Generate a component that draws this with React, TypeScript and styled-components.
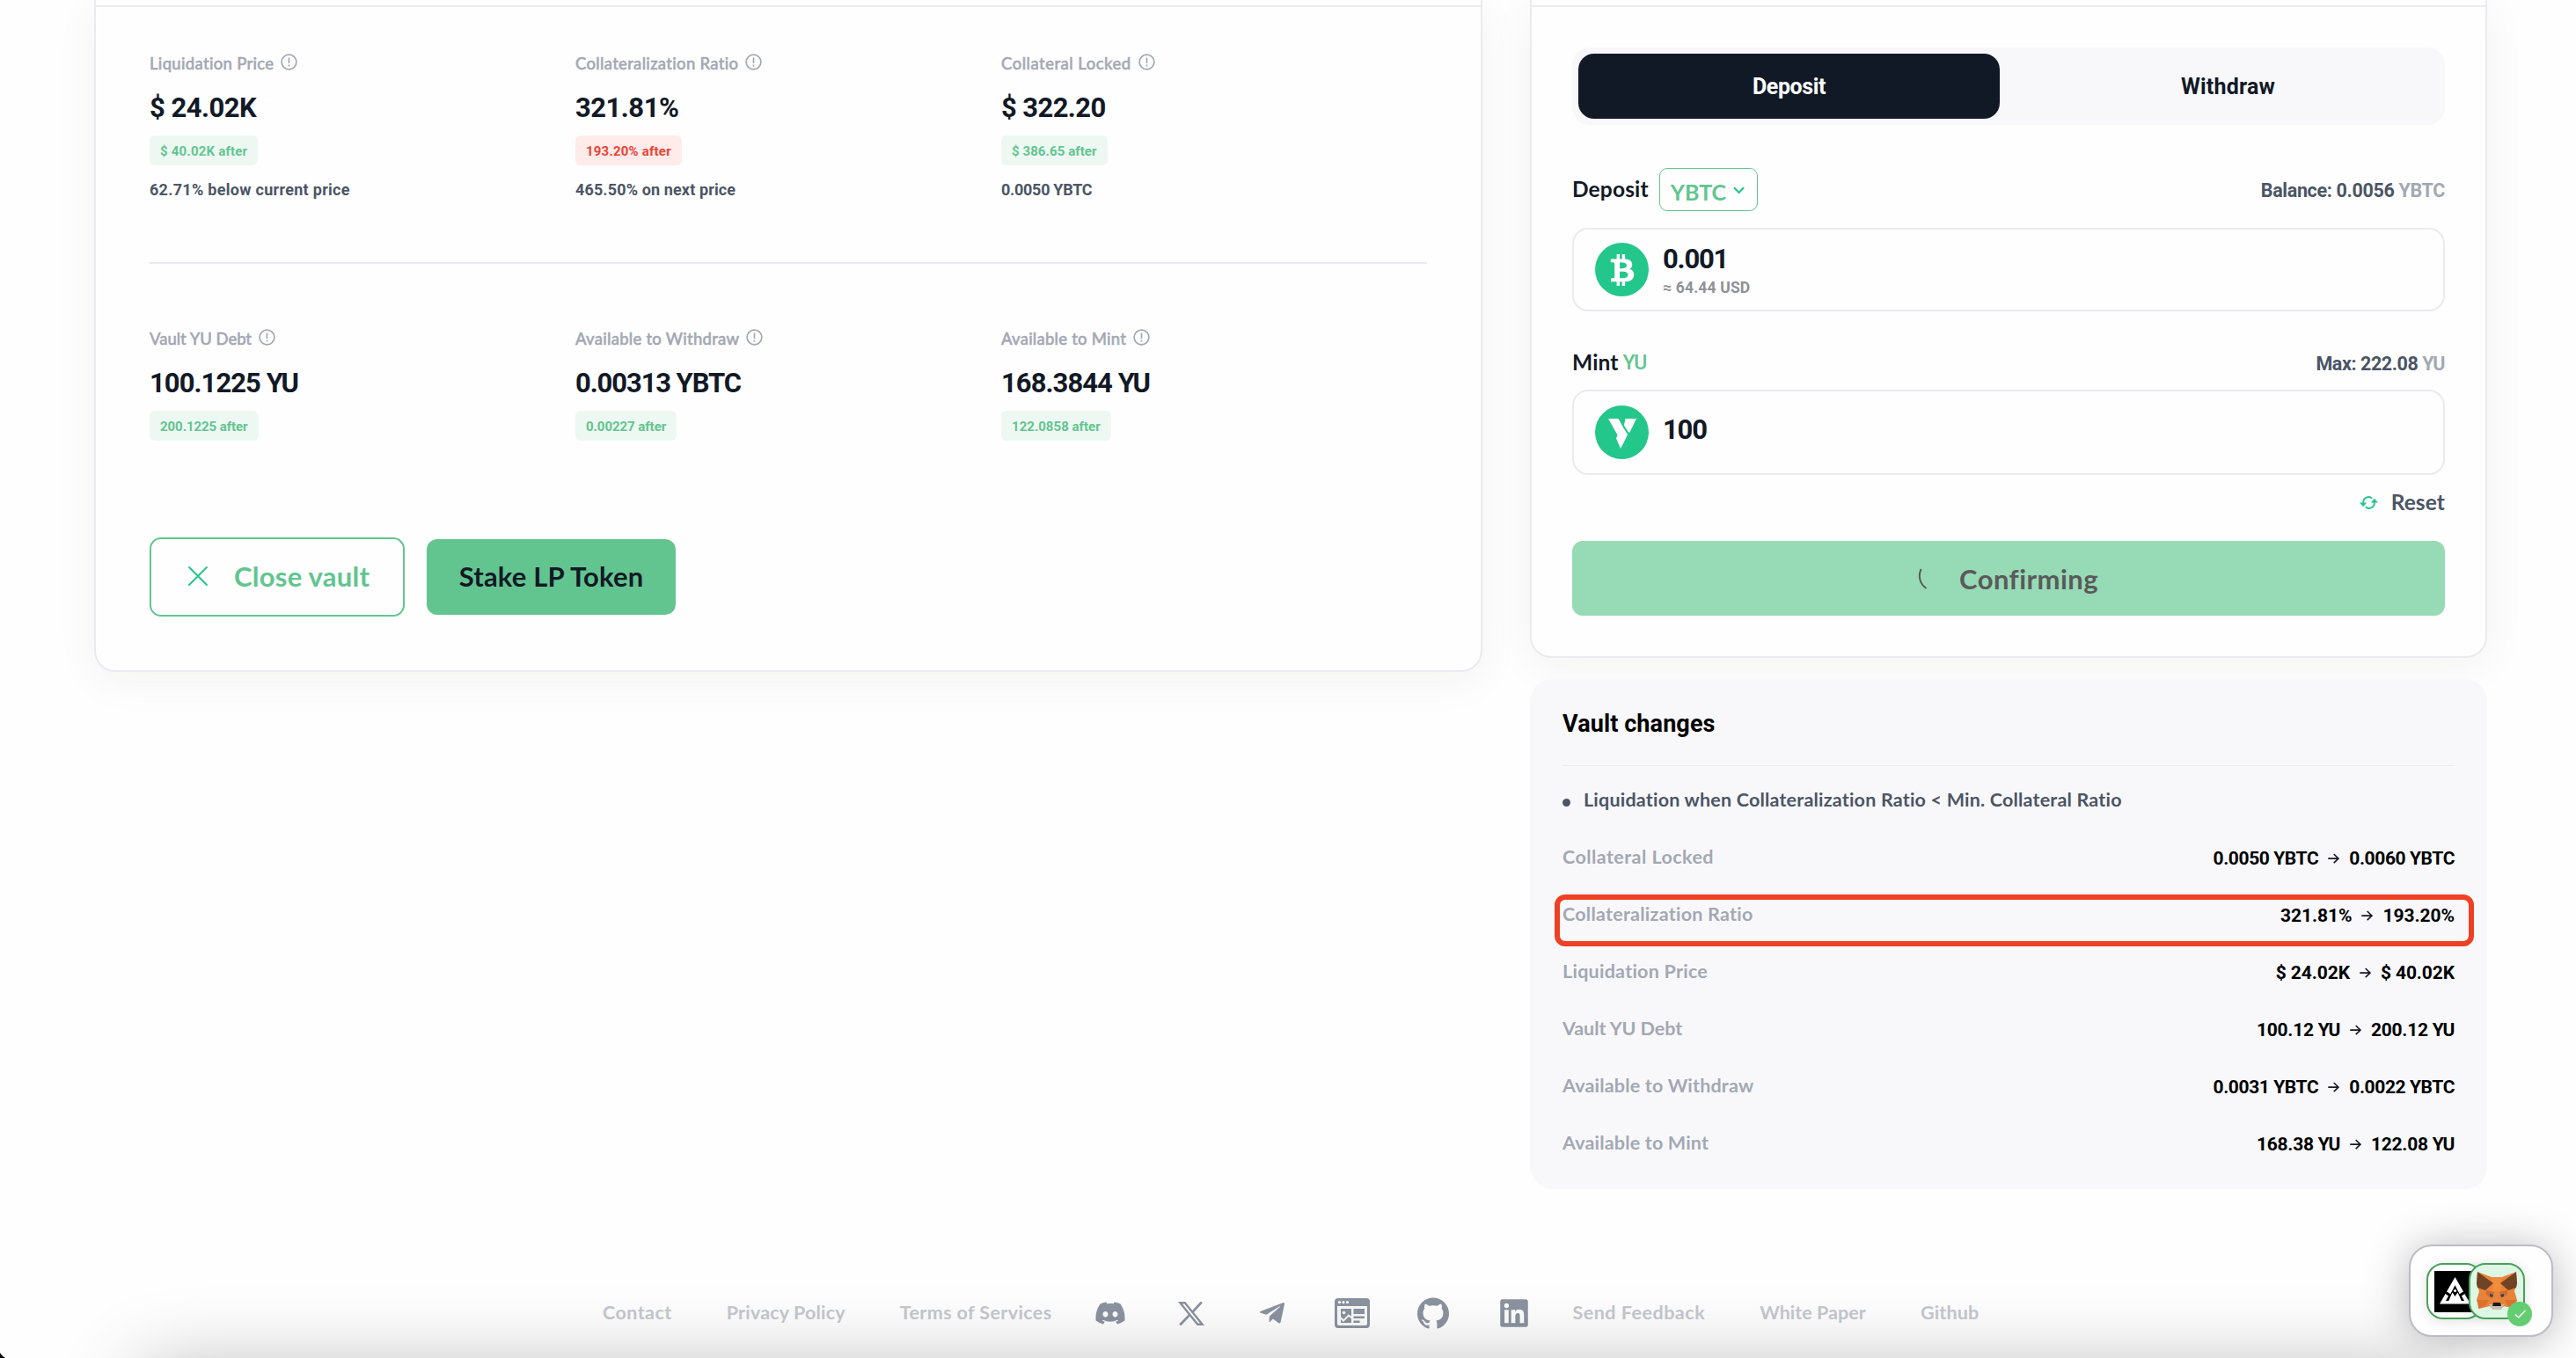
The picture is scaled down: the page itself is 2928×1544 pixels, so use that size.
import React from "react";
import styled, { createGlobalStyle } from "styled-components";
import { FaBtc, FaDiscord, FaLinkedin, FaTelegramPlane } from "react-icons/fa";
import { SiGithub } from "react-icons/si";

const sans = `Lato, "Open Sans", sans-serif`;
const din = `Roboto, "Noto Sans", sans-serif`;

const color = {
  ink: "#121926",
  slate: "#4b5565",
  muted: "#a3a8b3",
  green: "#62c58f",
  mint: "#24c78b",
  line: "#eaeaef",
  panel: "#f8f8fb",
};

const GlobalStyle = createGlobalStyle`
  *, *::before, *::after { box-sizing: border-box; }
  html, body { margin: 0; padding: 0; background: #fefefe; }
  body { font-family: ${sans}; color: ${color.ink}; overflow: hidden; }
  button { font: inherit; color: inherit; margin: 0; padding: 0; border: 0; background: none; }
  svg { display: block; }
`;

const Page = styled.div`
  position: relative;
  width: 2928px;
  height: 1544px;
  overflow: hidden;
  display: flex;
  flex-direction: column;
`;

const Columns = styled.main`
  display: flex;
  align-items: flex-start;
  gap: 54px;
  height: 1352px;
  padding-left: 107px;
`;

const Card = styled.section<{ $width: number; $height: number }>`
  width: ${(p) => p.$width}px;
  height: ${(p) => p.$height}px;
  border: 2px solid ${color.line};
  border-top: 0;
  border-radius: 0 0 24px 24px;
  background: #fefefe;
  box-shadow: 0 10px 50px rgba(30, 30, 20, 0.05);
`;

const CardHeaderEdge = styled.div`
  height: 8px;
  border-bottom: 2px solid ${color.line};
`;

const StatGrid = styled.div`
  display: grid;
  grid-template-columns: repeat(3, 484px);
  grid-template-rows: 292px 311px;
  padding: 0 61px;
`;

const StatCell = styled.div<{ $lined: boolean }>`
  display: flex;
  flex-direction: column;
  align-items: flex-start;
  padding-top: ${(p) => (p.$lined ? 52 : 73)}px;
  border-bottom: ${(p) => (p.$lined ? `2px solid ${color.line}` : "0")};
`;

const Tracked = styled.span<{ $track?: number }>`
  letter-spacing: ${(p) => p.$track ?? 0}px;
`;

const StatLabel = styled.div`
  display: flex;
  gap: 8px;
  font: 500 18.5px/24px ${sans};
  color: ${color.muted};
  -webkit-text-stroke: 0.5px ${color.muted};
  white-space: nowrap;

  svg {
    margin-top: 1px;
  }
`;

const StatValue = styled.div`
  margin-top: 19px;
  font: 700 31px/40px ${din};
  white-space: nowrap;
`;

const AfterBadge = styled.div<{ $danger?: boolean }>`
  margin-top: 11px;
  height: 34px;
  padding: 0 12px;
  border-radius: 6px;
  font: 700 15px/36px ${din};
  white-space: nowrap;
  color: ${(p) => (p.$danger ? "#ea4335" : color.green)};
  background: ${(p) => (p.$danger ? "#ffebea" : "#eef8f3")};
`;

const StatNote = styled.div`
  margin-top: 15px;
  font: 700 18px/25px ${din};
  color: ${color.slate};
  white-space: nowrap;
`;

const Actions = styled.div`
  display: flex;
  align-items: center;
  gap: 25px;
  padding: 0 61px;
`;

const OutlineButton = styled.button`
  display: flex;
  align-items: center;
  gap: 29px;
  width: 290px;
  height: 90px;
  padding: 0 0 2px 41px;
  border: 2px solid ${color.green};
  border-radius: 13px;
  font: 700 31px/40px ${sans};
  letter-spacing: 0.25px;
  color: ${color.green};
  white-space: nowrap;
`;

const SolidButton = styled.button`
  width: 283px;
  height: 86px;
  padding-bottom: 2px;
  border-radius: 12px;
  font: 700 31px/40px ${sans};
  letter-spacing: 0.2px;
  color: ${color.ink};
  background: ${color.green};
  white-space: nowrap;
`;

const SideColumn = styled.div`
  display: flex;
  flex-direction: column;
  gap: 24px;
`;

const FormBody = styled.div`
  display: flex;
  flex-direction: column;
  padding: 46px 46px 0;
`;

const Tabs = styled.div`
  display: grid;
  grid-template-columns: 479px 479px;
  gap: 20px;
  height: 88px;
  padding: 7px;
  border-radius: 20px;
  background: ${color.panel};
`;

const Tab = styled.button<{ $active?: boolean }>`
  padding-top: 2px;
  border-radius: 18px;
  font: 700 25px/72px ${din};
  color: ${(p) => (p.$active ? "#fff" : color.ink)};
  background: ${(p) => (p.$active ? color.ink : "transparent")};
`;

const FieldHead = styled.div<{ $top: number; $height: number }>`
  display: flex;
  align-items: center;
  justify-content: space-between;
  margin-top: ${(p) => p.$top}px;
  height: ${(p) => p.$height}px;
`;

const FieldTitle = styled.div`
  display: flex;
  align-items: center;
  gap: 12px;
  font: 700 24.5px/32px ${sans};
  letter-spacing: 0.15px;
  white-space: nowrap;
`;

const FieldName = styled.span<{ $raise?: number }>`
  padding-bottom: ${(p) => p.$raise ?? 0}px;
`;

const GreenUnit = styled.span`
  margin-left: -7px;
  padding-top: 2px;
  font: 500 23px/32px ${din};
  letter-spacing: -0.4px;
  color: ${color.green};
`;

const AssetSelect = styled.button`
  display: flex;
  align-items: center;
  gap: 8px;
  width: 112px;
  height: 49px;
  padding: 4px 0 0 12px;
  border: 1.5px solid ${color.green};
  border-radius: 9px;
  font: 700 25px/32px ${sans};
  color: ${color.green};

  svg {
    margin-bottom: 2px;
  }
`;

const Available = styled.div<{ $track: number }>`
  padding-top: 3px;
  font: 700 21.5px/30px ${din};
  letter-spacing: ${(p) => p.$track}px;
  color: ${color.slate};
  white-space: nowrap;
`;

const Unit = styled.span`
  color: ${color.muted};
`;

const AmountBox = styled.div<{ $top: number; $height: number }>`
  display: flex;
  align-items: center;
  gap: 16px;
  margin-top: ${(p) => p.$top}px;
  height: ${(p) => p.$height}px;
  padding-left: 24px;
  border: 2px solid ${color.line};
  border-radius: 18px;
`;

const TokenDisc = styled.div`
  display: flex;
  align-items: center;
  justify-content: center;
  width: 61px;
  height: 61px;
  border-radius: 50%;
  color: #fff;
  background: ${color.mint};
`;

const Amount = styled.div<{ $raise?: number }>`
  padding-bottom: ${(p) => p.$raise ?? 0}px;
  font: 700 31px/40px ${din};
  letter-spacing: -1.2px;
  white-space: nowrap;
`;

const AmountStack = styled.div`
  display: flex;
  flex-direction: column;
  height: 95px;
  padding-top: 16px;
`;

const AmountUsd = styled.div`
  font: 700 17.5px/24px ${din};
  letter-spacing: 0.15px;
  color: #8f9198;
  white-space: nowrap;
`;

const ResetRow = styled.div`
  display: flex;
  align-items: center;
  justify-content: flex-end;
  gap: 15px;
  margin-top: 14px;
  height: 34px;
  font: 700 24.5px/34px ${sans};
  letter-spacing: 0.1px;
  color: ${color.slate};
`;

const ConfirmButton = styled.button`
  display: flex;
  align-items: center;
  justify-content: center;
  gap: 36px;
  height: 85px;
  margin-top: 27px;
  padding-right: 1px;
  border-radius: 12px;
  font: 700 31px/40px ${sans};
  letter-spacing: 0.45px;
  color: #5a5a5a;
  background: #97dab6;
  box-shadow: 0 4px 4px rgba(0, 0, 0, 0.012);
`;

const ChangesPanel = styled.section`
  display: flex;
  flex-direction: column;
  width: 1088px;
  height: 580px;
  padding: 34px 37px 0;
  border-radius: 26px;
  background: ${color.panel};
`;

const ChangesTitle = styled.h2`
  margin: 0;
  height: 65px;
  border-bottom: 1px solid ${color.line};
  font: 700 27px/34px ${din};
  letter-spacing: 0.1px;
  color: #000;
`;

const Warning = styled.div`
  display: flex;
  align-items: center;
  gap: 15px;
  margin-top: 22px;
  height: 32px;
  font: 700 21.5px/32px ${sans};
  letter-spacing: 0.2px;
  color: ${color.slate};
`;

const Bullet = styled.i`
  width: 9px;
  height: 9px;
  margin-top: 6px;
  border-radius: 50%;
  background: ${color.slate};
`;

const ChangeList = styled.div`
  display: flex;
  flex-direction: column;
  padding-top: 17px;
`;

const ChangeRow = styled.div`
  position: relative;
  display: flex;
  align-items: center;
  justify-content: space-between;
  height: 65px;
`;

const ChangeName = styled.div`
  padding-bottom: 1px;
  font: 700 21.5px/32px ${sans};
  color: ${color.muted};
`;

const ChangeValues = styled.div`
  display: flex;
  align-items: center;
  gap: 11px;
  padding-top: 3px;
  font: 700 21px/32px ${din};
  color: #000;
`;

const Highlight = styled.div`
  position: absolute;
  left: -9px;
  top: 10px;
  width: 1045px;
  height: 59px;
  border: 6px solid #ee4024;
  border-radius: 12px;
`;

const Footer = styled.footer`
  display: flex;
  align-items: center;
  height: 80px;
  margin-top: 101px;
  padding-left: 685px;
  font: 700 21.5px/32px ${sans};
  color: #c5c8ce;
  white-space: nowrap;
`;

const FooterLinks = styled.nav<{ $width?: number }>`
  display: flex;
  gap: 62px;
  padding-bottom: 2px;
  width: ${(p) => (p.$width ? `${p.$width}px` : "auto")};
`;

const Socials = styled.div`
  display: grid;
  grid-template-columns: repeat(6, 91.7px);
  place-items: center;
  width: 571px;
  color: #8b93a0;
`;

const PageShade = styled.div`
  position: absolute;
  left: 160px;
  right: 160px;
  top: 1560px;
  height: 400px;
  border-radius: 20px;
  pointer-events: none;
  box-shadow: 0 0 94px rgba(0, 0, 0, 0.3);
`;

const WindowCorner = styled.div`
  position: absolute;
  left: 0;
  bottom: 0;
  width: 20px;
  height: 20px;
  background: radial-gradient(circle at 20px 0, transparent 24px, #000 25px);
`;

const WalletDock = styled.aside`
  position: absolute;
  left: 2738px;
  top: 1415px;
  display: flex;
  width: 164px;
  height: 105px;
  padding: 19px 0 0 18px;
  border: 2px solid #bcbcc6;
  border-radius: 26px;
  background: #fefefe;
  box-shadow: 0 4px 50px rgba(0, 0, 0, 0.28);
`;

const WalletTile = styled.div<{ $tint?: boolean }>`
  position: relative;
  display: flex;
  align-items: center;
  justify-content: center;
  width: 64px;
  height: 64px;
  margin-left: ${(p) => (p.$tint ? -16 : 0)}px;
  border: 2px solid #48a05a;
  border-radius: 19px;
  background: ${(p) => (p.$tint ? "#dcf7e4" : "#fff")};
  box-shadow: 0 2px 14px rgba(0, 0, 0, 0.12);
`;

const Connected = styled.div`
  position: absolute;
  right: -10px;
  bottom: -10px;
  width: 28px;
  height: 28px;
  border-radius: 50%;
  background: #63cd72;
`;

const InfoIcon = () => (
  <svg width="19" height="19" viewBox="0 0 19 19" fill="none" stroke={color.muted} strokeWidth="1.7">
    <circle cx="9.5" cy="9.5" r="8.4" />
    <path d="M9.5 4.6v6.4M9.5 12.6v1.9" />
  </svg>
);

const CrossIcon = () => (
  <svg width="24" height="24" viewBox="0 0 24 24" stroke={color.mint} strokeWidth="2" strokeLinecap="round">
    <path d="M2 2l20 20M22 2L2 22" />
  </svg>
);

const ChevronIcon = () => (
  <svg width="13" height="9" viewBox="0 0 13 9" fill="none" stroke={color.mint} strokeWidth="2.2">
    <path d="M1 1.2l5.5 5.8L12 1.2" />
  </svg>
);

const ArrowIcon = () => (
  <svg width="13" height="13" viewBox="0 0 13 13" fill="none" stroke="#121926" strokeWidth="1.6">
    <path d="M.3 6.1h11.6M6.700 1l5.3 5.1-5.3 5.1" />
  </svg>
);

const YuMark = () => (
  <svg width="34" height="36" viewBox="0 0 34 36" fill="#fff">
    <path d="M1 2h11.500l5.500 10 5 8-2 4.500-6 11.500-5-11.500 1.500-4z" />
    <path d="M20.500 2H33l-7.500 15.500h-1.600l-5-8z" />
  </svg>
);

const ResetIcon = () => (
  <svg width="21" height="17" viewBox="0 0 21 17" fill="none" stroke={color.mint} strokeWidth="2">
    <path d="M4.200 9.500V8a6 6 0 0 1 10-4.300" />
    <path d="M16.800 7.500V9a6 6 0 0 1-10 4.300" />
    <path d="M0 8.600h8.200l-4.100 4.600zM12.800 8.400h8.200l-4.100-4.600z" fill={color.mint} stroke="none" />
  </svg>
);

const SpinnerArc = () => (
  <svg width="11" height="24" viewBox="0 0 11 24" fill="none" stroke="#5a5a5a" strokeWidth="2">
    <path d="M3.600 1C.4 8 1.200 17 9.500 23" />
  </svg>
);

const XIcon = () => (
  <svg width="32" height="27" viewBox="0 0 32 27" fill="none" stroke="currentColor">
    <path d="M3.400 1.200h5.400L28.600 25.800h-5.400z" strokeWidth="2.400" />
    <path d="M27.800.5L17.600 11.600M13.800 15.400L3.200 26.500" strokeWidth="2.800" />
  </svg>
);

const NewsIcon = () => (
  <svg width="40" height="34" viewBox="0 0 40 34">
    <rect width="40" height="34" rx="4" fill="#8b93a0" />
    <path d="M3 9h34v20a2 2 0 0 1-2 2H5a2 2 0 0 1-2-2z" fill="#fafafa" />
    <g fill="#fafafa">
      <circle cx="5.500" cy="4.600" r="1.600" />
      <circle cx="10" cy="4.600" r="1.600" />
      <circle cx="14.500" cy="4.600" r="1.600" />
    </g>
    <g fill="#8b93a0">
      <rect x="7" y="12" width="12" height="16" />
      <rect x="21.500" y="12" width="12.500" height="6" />
      <rect x="21.500" y="20.500" width="12.500" height="2.500" />
      <rect x="21.500" y="25.500" width="7" height="2.500" />
    </g>
    <circle cx="10.500" cy="16.500" r="1.800" fill="#fafafa" />
    <path d="M6.500 22l3.500 3.500 6-6 3.500 3" fill="none" stroke="#fafafa" strokeWidth="2" />
  </svg>
);

const PeakMark = () => (
  <svg width="47" height="47" viewBox="0 0 47 47">
    <rect width="47" height="47" fill="#000" />
    <path d="M23.500 7L14 23.500l4.300 2.700 5.200-10 5.200 10 4.300-2.700z" fill="#fff" />
    <path d="M12.600 26L6 37.500h35L34.400 26l-3.400 2.400 3 5.600h-3.200L26.500 24.500l-3 4.500-3-4.500L16.200 34H13l3-5.600z" fill="#fff" />
    <circle cx="23.500" cy="22.500" r="1.600" fill="#fff" />
  </svg>
);

const FoxMark = () => (
  <svg width="48" height="44" viewBox="0 0 48 44">
    <path d="M2 0l16 6h12L46 0l1 14-3 8 3 10-3 10-12-3-4 4h-8l-4-4-12 3-3-10 3-10L1 14z" fill="#e8833a" />
    <path d="M18 6h12l-2 16h-8z" fill="#f08c3a" />
    <path d="M2 0l18 13-9 8-9-3-1-5zM46 0L28 13l9 8 9-3 1-5z" fill="#6f4324" />
    <path d="M12 21l9 2-2 7-7-4zM36 21l-9 2 2 7 7-4z" fill="#d06a2e" />
    <path d="M2 32h13l-3 6-9 4zM46 32H33l3 6 9 4z" fill="#d9732f" />
    <path d="M16 25l4 1-1 3-3-1zM32 25l-4 1 1 3 3-1z" fill="#2d4b63" />
    <path d="M15 37h18l-5 6h-8z" fill="#c9bcb0" />
    <path d="M20 35h8l1 4H19z" fill="#15181b" />
  </svg>
);

const CheckIcon = () => (
  <svg width="28" height="28" viewBox="0 0 28 28" fill="none" stroke="#fff" strokeWidth="1.6">
    <path d="M9 14.500l3.700 3.500L20.500 10" />
  </svg>
);

/** A string with its letter spacing in pixels. */
type Copy = [text: string, track: number];
type Stat = { label: Copy; value: Copy; after: Copy; note?: Copy; danger?: boolean };

const stats: Stat[] = [
  {
    label: ["Liquidation Price", 0.3],
    value: ["$ 24.02K", -0.5],
    after: ["$ 40.02K after", 0.2],
    note: ["62.71% below current price", 0.29],
  },
  {
    label: ["Collateralization Ratio", 0.3],
    value: ["321.81%", -0.5],
    after: ["193.20% after", 0.2],
    note: ["465.50% on next price", 0.13],
    danger: true,
  },
  {
    label: ["Collateral Locked", 0.48],
    value: ["$ 322.20", -0.6],
    after: ["$ 386.65 after", 0.08],
    note: ["0.0050 YBTC", -0.28],
  },
  { label: ["Vault YU Debt", -0.04], value: ["100.1225 YU", -0.95], after: ["200.1225 after", -0.06] },
  { label: ["Available to Withdraw", 0.25], value: ["0.00313 YBTC", -1.1], after: ["0.00227 after", -0.05] },
  { label: ["Available to Mint", 0.22], value: ["168.3844 YU", -0.95], after: ["122.0858 after", 0.02] },
];

type Change = { name: Copy; from: string; to: string; track: number; marked?: boolean };

const changes: Change[] = [
  { name: ["Collateral Locked", 0.44], from: "0.0050 YBTC", to: "0.0060 YBTC", track: -0.4 },
  { name: ["Collateralization Ratio", 0.25], from: "321.81%", to: "193.20%", track: -0.05, marked: true },
  { name: ["Liquidation Price", 0.25], from: "$ 24.02K", to: "$ 40.02K", track: -0.1 },
  { name: ["Vault YU Debt", -0.06], from: "100.12 YU", to: "200.12 YU", track: -0.27 },
  { name: ["Available to Withdraw", 0.18], from: "0.0031 YBTC", to: "0.0022 YBTC", track: -0.4 },
  { name: ["Available to Mint", 0.18], from: "168.38 YU", to: "122.08 YU", track: -0.27 },
];

const leftLinks: Copy[] = [
  ["Contact", 0.45],
  ["Privacy Policy", 0.17],
  ["Terms of Services", 0.38],
];

const rightLinks: Copy[] = [
  ["Send Feedback", 0.5],
  ["White Paper", 0.05],
  ["Github", 0.15],
];

const Line = ({ copy }: { copy: Copy }) => <Tracked $track={copy[1]}>{copy[0]}</Tracked>;

export default function App() {
  return (
    <>
      <GlobalStyle />
      <Page>
        <PageShade />
        <Columns>
          <Card $width={1578} $height={764}>
            <CardHeaderEdge />
            <StatGrid>
              {stats.map((s) => (
                <StatCell key={s.label[0]} $lined={Boolean(s.note)}>
                  <StatLabel>
                    <Line copy={s.label} />
                    <InfoIcon />
                  </StatLabel>
                  <StatValue>
                    <Line copy={s.value} />
                  </StatValue>
                  <AfterBadge $danger={s.danger}>
                    <Line copy={s.after} />
                  </AfterBadge>
                  {s.note && (
                    <StatNote>
                      <Line copy={s.note} />
                    </StatNote>
                  )}
                </StatCell>
              ))}
            </StatGrid>
            <Actions>
              <OutlineButton>
                <CrossIcon />
                <span>Close vault</span>
              </OutlineButton>
              <SolidButton>Stake LP Token</SolidButton>
            </Actions>
          </Card>

          <SideColumn>
            <Card $width={1088} $height={748}>
              <CardHeaderEdge />
              <FormBody>
                <Tabs>
                  <Tab $active>
                    <Tracked $track={-0.4}>Deposit</Tracked>
                  </Tab>
                  <Tab>
                    <Tracked $track={0.2}>Withdraw</Tracked>
                  </Tab>
                </Tabs>
                <FieldHead $top={49} $height={49}>
                  <FieldTitle>
                    <FieldName $raise={2}>Deposit</FieldName>
                    <AssetSelect>
                      <span>YBTC</span>
                      <ChevronIcon />
                    </AssetSelect>
                  </FieldTitle>
                  <Available $track={-0.33}>
                    Balance: 0.0056 <Unit>YBTC</Unit>
                  </Available>
                </FieldHead>
                <AmountBox $top={19} $height={95}>
                  <TokenDisc>
                    <FaBtc size={36} />
                  </TokenDisc>
                  <AmountStack>
                    <Amount>0.001</Amount>
                    <AmountUsd>≈ 64.44 USD</AmountUsd>
                  </AmountStack>
                </AmountBox>
                <FieldHead $top={42} $height={32}>
                  <FieldTitle>
                    <FieldName>Mint</FieldName>
                    <GreenUnit>YU</GreenUnit>
                  </FieldTitle>
                  <Available $track={-0.42}>
                    Max: 222.08 <Unit>YU</Unit>
                  </Available>
                </FieldHead>
                <AmountBox $top={15} $height={97}>
                  <TokenDisc>
                    <YuMark />
                  </TokenDisc>
                  <Amount $raise={5}>100</Amount>
                </AmountBox>
                <ResetRow>
                  <ResetIcon />
                  <span>Reset</span>
                </ResetRow>
                <ConfirmButton>
                  <SpinnerArc />
                  <span>Confirming</span>
                </ConfirmButton>
              </FormBody>
            </Card>

            <ChangesPanel>
              <ChangesTitle>Vault changes</ChangesTitle>
              <Warning>
                <Bullet />
                <span>Liquidation when Collateralization Ratio &lt; Min. Collateral Ratio</span>
              </Warning>
              <ChangeList>
                {changes.map((c) => (
                  <ChangeRow key={c.name[0]}>
                    <ChangeName>
                      <Line copy={c.name} />
                    </ChangeName>
                    <ChangeValues>
                      <Tracked $track={c.track}>{c.from}</Tracked>
                      <ArrowIcon />
                      <Tracked $track={c.track}>{c.to}</Tracked>
                    </ChangeValues>
                    {c.marked && <Highlight />}
                  </ChangeRow>
                ))}
              </ChangeList>
            </ChangesPanel>
          </SideColumn>
        </Columns>

        <Footer>
          <FooterLinks $width={531.5}>
            {leftLinks.map((l) => (
              <Line key={l[0]} copy={l} />
            ))}
          </FooterLinks>
          <Socials>
            <FaDiscord size={36} />
            <XIcon />
            <FaTelegramPlane size={32} />
            <NewsIcon />
            <SiGithub size={36} />
            <FaLinkedin size={36} />
          </Socials>
          <FooterLinks>
            {rightLinks.map((l) => (
              <Line key={l[0]} copy={l} />
            ))}
          </FooterLinks>
        </Footer>

        <WalletDock>
          <WalletTile>
            <PeakMark />
          </WalletTile>
          <WalletTile $tint>
            <FoxMark />
            <Connected>
              <CheckIcon />
            </Connected>
          </WalletTile>
        </WalletDock>
        <WindowCorner />
      </Page>
    </>
  );
}
